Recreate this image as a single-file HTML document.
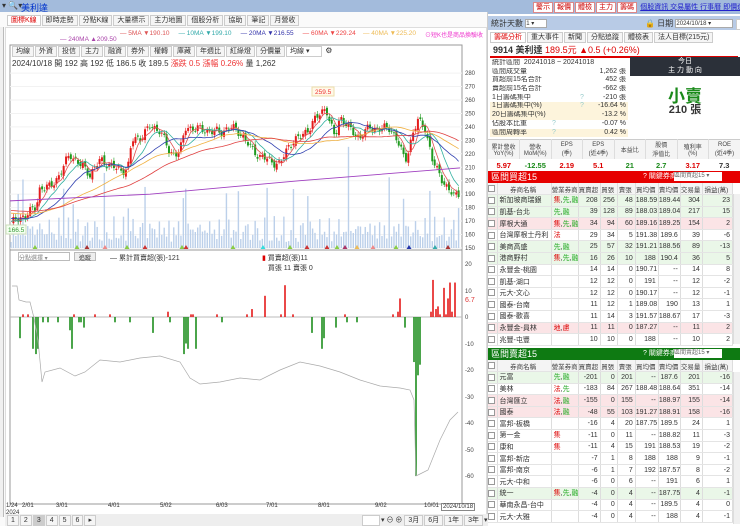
<!DOCTYPE html>
<html><head><meta charset="utf-8">
<style>
*{box-sizing:border-box;margin:0;padding:0}
body{width:740px;height:526px;overflow:hidden;background:#fff;font-family:"Liberation Sans","Noto Sans CJK TC",sans-serif;font-size:8px;color:#333;position:relative}
.abs{position:absolute}
.topbar{left:0;top:0;width:740px;height:12px;background:#a3bbdc}
.tab{display:inline-block;border:1px solid #ccc;background:#f5f5f5;padding:0 3px;height:11px;line-height:10px;font-size:7px;margin-right:1px;color:#333}
.btn{display:inline-block;border:1px solid #d88;background:#fff;color:#c00;font-size:7px;padding:0 2px;height:11px;line-height:10px;margin-right:1px}
table{border-collapse:collapse;table-layout:fixed}
.tb td{height:11.6px;font-size:7px;border-right:1px solid #ddd;border-bottom:1px solid #e4e4e4;text-align:right;padding-right:2px;white-space:nowrap;overflow:hidden}
.tb td.l{text-align:left;padding-left:2px}
.tb td.c{text-align:center}
.tb tr.h td{background:#f4f4f4;text-align:center;color:#444;font-size:6.5px}
.g td{background:#eaf7e8}.p td{background:#fbe4e6}
.tg{color:#d00}.tgg{color:#2a2}
.ck{display:inline-block;width:7px;height:7px;border:1px solid #999;background:#fff;vertical-align:middle}
.sr{position:relative;height:8.7px;line-height:8.7px;font-size:7px;white-space:nowrap;padding-left:2px;overflow:hidden}
.sr b{position:absolute;right:2px;top:0;font-weight:normal}
.sr i{position:absolute;left:90px;top:0;font-style:normal;color:#9cc}
.y{background:#fdf4dc}
</style></head><body>
<div class="abs topbar"></div>
<div class="abs" style="left:2px;top:1px;font-size:8px;color:#333">▾ 🔍▾</div>
<div class="abs" style="left:21px;top:1px;font-size:9px;color:#0033cc">美利達</div>
<div class="abs" style="left:0;top:12px;width:488px;height:514px;background:#fafafa;border-right:1px solid #ccc"></div>
<div class="abs" style="left:0;top:27px;width:4px;height:490px;border-right:1px solid #bbb;background:#f0f0f0"></div>
<div class="abs" style="left:7px;top:15px;white-space:nowrap">
<span class="tab" style="color:#d00;background:#fff">圖標K線</span><span class="tab">即時走勢</span><span class="tab">分點K線</span><span class="tab">大量標示</span><span class="tab">主力地圖</span><span class="tab">個股分析</span><span class="tab">協助</span><span class="tab">筆記</span><span class="tab">月營收</span></div>
<div class="abs" style="left:5px;top:27px;width:482px;height:488px;background:#fff;border:1px solid #ddd"></div>
<div class="abs" style="left:120px;top:30px;font-size:6.5px;white-space:nowrap"><span style="color:#d55">— 5MA ▼190.10</span>&nbsp;&nbsp;&nbsp;&nbsp;&nbsp;<span style="color:#3aa">— 10MA ▼199.10</span>&nbsp;&nbsp;&nbsp;&nbsp;&nbsp;<span style="color:#33a">— 20MA ▼216.55</span>&nbsp;&nbsp;&nbsp;&nbsp;&nbsp;<span style="color:#e44">— 60MA ▼229.24</span>&nbsp;&nbsp;&nbsp;&nbsp;<span style="color:#eb5">— 40MA ▼225.20</span></div>
<div class="abs" style="left:60px;top:36px;font-size:6.5px;color:#a4a">— 240MA ▲209.50</div>
<div class="abs" style="left:425px;top:30px;font-size:6px;color:#e3c">⊙短K也是商品換驗收</div>
<div class="abs" style="left:12px;top:46px;white-space:nowrap"><span class="tab">均線</span><span class="tab">外資</span><span class="tab">投信</span><span class="tab">主力</span><span class="tab">融資</span><span class="tab">券外</span><span class="tab">權轉</span><span class="tab">庫藏</span><span class="tab">年週比</span><span class="tab">紅綠燈</span><span class="tab">分價量</span><span class="tab" style="width:36px;background:#fff">均線 ▾</span> ⚙</div>
<div class="abs" style="left:12px;top:58px;font-size:8px;white-space:nowrap">2024/10/18 開 192 高 192 低 186.5 收 189.5 <span style="color:#e33">漲跌 0.5 漲幅 0.26%</span> 量 1,262</div>
<svg class="abs" style="left:0;top:0" width="488" height="526" id="ch"></svg>
<div class="abs" style="left:18px;top:252px;width:52px;height:9px;border:1px solid #bbb;font-size:6px;color:#888;background:#fff">分點選擇 ▾</div>
<div class="abs" style="left:74px;top:252px;width:22px;height:9px;border:1px solid #bbb;font-size:6px;background:#eee;text-align:center">追蹤</div>
<div class="abs" style="left:110px;top:253px;font-size:7px">— 累計買賣超(張)-121</div>
<div class="abs" style="left:262px;top:253px;font-size:7px"><span style="color:#d00">▮</span> 買賣超(張)11<br>&nbsp;&nbsp;&nbsp;買張 11 賣張 0</div>
<div class="abs" style="left:6px;top:503px;font-size:6px;line-height:7px">1/24<br>2024</div>
<div class="abs" style="left:0;top:503px;width:488px;font-size:6px">
<span class="abs" style="left:22px">2/01</span><span class="abs" style="left:56px">3/01</span><span class="abs" style="left:108px">4/01</span><span class="abs" style="left:160px">5/02</span><span class="abs" style="left:216px">6/03</span><span class="abs" style="left:266px">7/01</span><span class="abs" style="left:318px">8/01</span><span class="abs" style="left:375px">9/02</span><span class="abs" style="left:424px">10/01</span><span class="abs" style="left:441px;border:1px solid #888;padding:0 1px;background:#fff">2024/10/18</span></div>
<div class="abs" style="left:5px;top:514px;width:483px;height:12px;background:#eee"></div>
<div class="abs" style="left:7px;top:515px;font-size:7px;white-space:nowrap"><span class="tab">1</span><span class="tab">2</span><span class="tab" style="background:#ccc">3</span><span class="tab">4</span><span class="tab">5</span><span class="tab">6</span><span class="tab">▸</span></div>
<div class="abs" style="left:362px;top:515px;font-size:7px;white-space:nowrap"><span class="tab" style="width:18px;background:#fff">&nbsp;</span>▾ ⊖ ⊕ <span class="tab">3月</span><span class="tab">6月</span><span class="tab">1年</span><span class="tab">3年</span>▾<span class="tab">邊選</span></div>

<!-- right panel -->
<div class="abs" style="left:488px;top:0;width:252px;height:526px;background:#fff"></div>
<div class="abs" style="left:488px;top:0;width:252px;height:14px;background:#a3bbdc"></div>
<div class="abs" style="left:533px;top:2px;white-space:nowrap"><span class="btn">警示</span><span class="btn">報價</span><span class="btn">體檢</span><span class="btn">主力</span><span class="btn">籌碼</span> <span style="color:#22c;text-decoration:underline;font-size:7px">個股資訊 交易屬性 行事曆 即價選記</span></div>
<div class="abs" style="left:488px;top:16px;width:252px;height:14px;background:#b8cbe6"></div>
<div class="abs" style="left:491px;top:18px;font-size:8px">統計天數 <span style="display:inline-block;width:22px;height:9px;background:#fff;border:1px solid #aaa;font-size:6px;vertical-align:middle">1 ▾</span></div>
<div class="abs" style="left:645px;top:18px;font-size:8px;white-space:nowrap">🔒 日期 <span style="display:inline-block;width:58px;height:9px;background:#fff;border:1px solid #aaa;font-size:6px;vertical-align:middle">2024/10/18 ▾</span> <span class="tab" style="background:#fff">今天</span></div>
<div class="abs" style="left:490px;top:32px;white-space:nowrap"><span class="tab" style="color:#d00;background:#fff">籌碼分析</span><span class="tab">重大事件</span><span class="tab">新聞</span><span class="tab">分點追蹤</span><span class="tab">體檢表</span><span class="tab">法人目標(215元)</span></div>
<div class="abs" style="left:490px;top:44px;width:248px;height:14px;border-bottom:2px solid #d00;font-size:9px;padding-left:3px;line-height:13px"><b>9914 美利達</b> <span style="color:#d00">189.5元 ▲0.5 (+0.26%)</span></div>
<div class="abs" style="left:490px;top:59px;width:138px">
<div class="sr">統計區間 &nbsp;20241018 ~ 20241018</div>
<div class="sr">區間成交量<b>1,262 張</b></div>
<div class="sr">買超前15名合計<b>452 張</b></div>
<div class="sr">賣超前15名合計<b>-662 張</b></div>
<div class="sr">1日籌碼集中<i>?</i><b>-210 張</b></div>
<div class="sr y">1日籌碼集中(%)<i>?</i><b>-16.64 %</b></div>
<div class="sr y">20日籌碼集中(%)<b>-13.2 %</b></div>
<div class="sr">佔股本比重<i style="left:62px">?</i><b>-0.07 %</b></div>
<div class="sr y">區間周轉率<i style="left:62px">?</i><b>0.42 %</b></div>
</div>
<div class="abs" style="left:630px;top:57px;width:110px;height:19px;background:#2b3039;color:#fff;text-align:center;font-size:7px;line-height:9px">今日<br>主 力 動 向</div>
<div class="abs" style="left:630px;top:82px;width:110px;text-align:center;font-size:17px;color:#1a8a1a;font-weight:bold">小賣</div>
<div class="abs" style="left:630px;top:101px;width:110px;text-align:center;font-size:11px;font-weight:bold">210 張</div>
<table class="abs" style="left:488px;top:139px;width:252px;border-top:1px solid #ccc">
<tr style="height:19px;background:#f4f4f4;font-size:6px;text-align:center;color:#444"><td style="border-right:1px solid #ddd">累計營收<br>YoY(%)</td><td style="border-right:1px solid #ddd">營收<br>MoM(%)</td><td style="border-right:1px solid #ddd">EPS<br>(季)</td><td style="border-right:1px solid #ddd">EPS<br>(近4季)</td><td style="border-right:1px solid #ddd">本益比</td><td style="border-right:1px solid #ddd">股價<br>淨值比</td><td style="border-right:1px solid #ddd">殖利率<br>(%)</td><td>ROE<br>(近4季)</td></tr>
<tr style="height:13px;font-size:7.5px;text-align:center;font-weight:bold"><td style="color:#d00">5.97</td><td style="color:#1a8a1a">-12.55</td><td style="color:#d00">2.19</td><td style="color:#d00">5.1</td><td style="color:#1a8a1a">21</td><td style="color:#1a8a1a">2.7</td><td style="color:#d00">3.17</td><td>7.3</td></tr>
</table>
<div class="abs" style="left:488px;top:171px;width:252px;height:12px;background:#e60000;color:#fff;font-size:9px;line-height:12px;padding-left:3px">區間買超15<span style="position:absolute;left:155px;font-size:7px">? 關鍵券商:</span><span style="position:absolute;left:186px;top:1px;width:48px;height:9px;background:#fff;color:#666;font-size:6px;line-height:9px">區間買超15 ▾</span></div>
<div class="abs" style="left:488px;top:348px;width:252px;height:12px;background:#0e7a12;color:#fff;font-size:9px;line-height:12px;padding-left:3px">區間賣超15<span style="position:absolute;left:155px;font-size:7px">? 關鍵券商:</span><span style="position:absolute;left:186px;top:1px;width:48px;height:9px;background:#fff;color:#666;font-size:6px;line-height:9px">區間賣超15 ▾</span></div>
<div class="abs" style="left:733px;top:194px;width:7px;height:150px;background:#f0f0f0;border-left:1px solid #ddd"></div>
<div class="abs" style="left:733px;top:372px;width:7px;height:152px;background:#f0f0f0;border-left:1px solid #ddd"></div>
<div id="t1" class="abs" style="left:488px;top:183px"></div>
<div id="t2" class="abs" style="left:488px;top:360px"></div>

<script>
var W=[9,54,27,22,17,18,23,22,22,30];
function tbl(id,rows){
 var h='<table class="tb" style="width:245px"><colgroup>'+W.map(function(w){return '<col style="width:'+w+'px">'}).join('')+'</colgroup>';
 h+='<tr class="h"><td><span class="ck"></span></td><td>券商名稱</td><td>營業券商</td><td>買賣超</td><td>買張</td><td>賣張</td><td>買均價</td><td>賣均價</td><td>交易量</td><td>損益(萬)</td></tr>';
 rows.forEach(function(r){
  var c=r[0]||'';var tags=(r[2]||'').split(',').map(function(t){return t? '<span class="'+(t=='先'||t=='融'||t=='外'?'tgg':'tg')+'">'+t+'</span>':''}).join(r[2]?',':'');
  h+='<tr class="'+c+'"><td class="c"><span class="ck">'+(r[11]?'✓':'')+'</span></td><td class="l">'+r[1]+'</td><td class="l">'+tags+'</td>';
  for(var i=3;i<10;i++)h+='<td>'+r[i]+'</td>';h+='</tr>';
 });
 document.getElementById(id).innerHTML=h+'</table>';
}
tbl('t1',[
['g','新加坡商瑞銀','集,先,融',208,256,48,'188.59','189.44',304,23],
['g','凱基-台北','先,融',39,128,89,'188.03','189.04',217,15],
['p','摩根大通','集,先,融',34,94,60,'189.16','189.25',154,2],
['','台灣摩根士丹利','法',29,34,5,'191.38','189.6',39,-6],
['g','美商高盛','先,融',25,57,32,'191.21','188.56',89,-13],
['g','港商野村','集,先,融',16,26,10,'188','190.4',36,5],
['','永豐金-桃園','',14,14,0,'190.71','--',14,8],
['','凱基-湖口','',12,12,0,'191','--',12,-2],
['','元大-文心','',12,12,0,'190.17','--',12,-1],
['','國泰-台南','',11,12,1,'189.08','190',13,1],
['','國泰-歡喜','',11,14,3,'191.57','188.67',17,-3],
['p','永豐金-員林','地,慮',11,11,0,'187.27','--',11,2,1],
['','兆豐-屯豐','',10,10,0,'188','--',10,2]]);
tbl('t2',[
['g','元富','先,融',-201,0,201,'--','187.6',201,-16],
['','美林','法,先',-183,84,267,'188.48','188.64',351,-14],
['p','台灣匯立','法,融',-155,0,155,'--','188.97',155,-14],
['p','國泰','法,融',-48,55,103,'191.27','188.91',158,-16],
['','富邦-板橋','',-16,4,20,'187.75','189.5',24,1],
['','第一金','集',-11,0,11,'--','188.82',11,-3],
['','康和','集',-11,4,15,'191','188.53',19,-2],
['','富邦-新店','',-7,1,8,'188','188',9,-1],
['','富邦-南京','',-6,1,7,'192','187.57',8,-2],
['','元大-中和','',-6,0,6,'--','191',6,1],
['g','統一','集,先,融',-4,0,4,'--','187.75',4,-1],
['','華南永昌-台中','',-4,0,4,'--','189.5',4,0],
['','元大-大雅','',-4,0,4,'--','188',4,-1]]);

var s='';
function Y(p){return 100+(260-p)*1.345}
s+='<rect x="10" y="45" width="452" height="459" fill="none" stroke="#999"/>';
s+='<line x1="10" y1="250" x2="462" y2="250" stroke="#999"/>';
for(var p=150;p<=280;p+=10){s+='<text x="465" y="'+(Y(p)+2)+'" font-size="6" fill="#444">'+p+'</text>';s+='<line x1="10" x2="462" y1="'+Y(p)+'" y2="'+Y(p)+'" stroke="#f2f2f2"/>'}
var kp=[[10,168],[20,172],[36,180],[40,195],[50,195],[60,205],[70,220],[80,212],[90,205],[100,215],[110,212],[120,207],[128,210],[132,230],[140,232],[150,240],[160,238],[170,220],[180,222],[186,240],[200,238],[220,236],[230,240],[240,236],[250,225],[260,218],[270,215],[280,212],[290,228],[300,232],[310,240],[320,250],[326,255],[330,242],[335,232],[340,248],[350,238],[360,232],[370,240],[380,238],[390,240],[400,225],[405,215],[412,232],[418,245],[425,240],[432,215],[440,205],[448,192],[455,190],[460,191]];
function interp(x){for(var i=1;i<kp.length;i++)if(x<=kp[i][0]){var a=kp[i-1],b=kp[i];return a[1]+(b[1]-a[1])*(x-a[0])/(b[0]-a[0])}return 191}
var N=188,dx=450/N,cl=[],xs=[];
for(var i=0;i<N;i++){var x=11+i*dx;xs.push(x);cl.push(interp(x)+Math.sin(i*1.7)*2.5+Math.sin(i*0.9)*1.5)}
for(var i=0;i<N;i++){var v=6+Math.abs(Math.sin(i*2.3)*16+Math.sin(i*0.7)*10);if(i%17==5)v+=45;if(i%23==3)v+=30;s+='<rect x="'+(xs[i]-0.7)+'" y="'+(248-v)+'" width="1.4" height="'+v+'" fill="#bcd0ea"/>'}
for(var i=1;i<N;i++){var o=cl[i-1]+Math.sin(i*3.1)*1.5,c=cl[i],up=c>=o,col=up?'#e41b1b':'#1f9a1f';var hi=Math.max(o,c)+1.2+Math.abs(Math.sin(i))*1.5,lo=Math.min(o,c)-1.2-Math.abs(Math.cos(i))*1.5;
s+='<line x1="'+xs[i]+'" x2="'+xs[i]+'" y1="'+Y(hi)+'" y2="'+Y(lo)+'" stroke="'+col+'" stroke-width="0.6"/>';
s+='<rect x="'+(xs[i]-1)+'" y="'+Y(Math.max(o,c))+'" width="2" height="'+Math.max(0.8,Math.abs(o-c)*1.345)+'" fill="'+col+'"/>'}
function ma(n,col,pre){var pts=[];for(var i=0;i<N;i++){var t=0;for(var k=0;k<n;k++){t+=(i-k>=0?cl[i-k]:pre)}pts.push(xs[i].toFixed(1)+','+Y(t/n).toFixed(1))}s+='<polyline fill="none" stroke="'+col+'" stroke-width="0.8" points="'+pts.join(' ')+'"/>'}
ma(5,'#e05050',170);ma(10,'#30b0a0',170);ma(20,'#3040b0',172);ma(40,'#f0b040',176);ma(60,'#e04040',178);
s+='<polyline fill="none" stroke="#a040c0" stroke-width="0.9" points="10,'+Y(185)+' 150,'+Y(190)+' 300,'+Y(200)+' 460,'+Y(209.5)+'"/>';
s+='<rect x="312" y="87" width="22" height="9" fill="#fff8e8" stroke="#eda"/><text x="315" y="94" font-size="6.5" fill="#e33">259.5</text>';
s+='<rect x="6" y="225" width="20" height="9" fill="#f4fff0" stroke="#cdb"/><text x="8" y="232" font-size="6.5" fill="#393">166.5</text>';
[[35,'#8c4'],[77,'#8c4'],[87,'#a33'],[105,'#e88'],[127,'#8c4'],[145,'#c33'],[182,'#8c4'],[186,'#c33'],[233,'#8c4'],[263,'#3dd'],[290,'#8c4'],[307,'#c33'],[327,'#c33'],[337,'#8c4'],[345,'#a36'],[357,'#eb5'],[373,'#e88'],[396,'#8c4'],[409,'#23a'],[435,'#3aa'],[448,'#a33']].forEach(function(t){s+='<polygon points="'+(t[0]-2.5)+',249 '+(t[0]+2.5)+',249 '+t[0]+',245" fill="'+t[1]+'"/>'});
function L(v){return 317-v*2.65}
[[20,264],[10,291],[0,317],[-10,344],[-20,370],[-30,397],[-40,423],[-50,450],[-60,476]].forEach(function(a){s+='<text x="465" y="'+(a[1]+2)+'" font-size="6" fill="#444">'+a[0]+'</text>'});
s+='<text x="465" y="302" font-size="7" fill="#d33">6.7</text>';
s+='<line x1="10" x2="462" y1="317" y2="317" stroke="#bbb"/>';
var lb=[[20,-8],[23,1],[28,1],[33,-12],[36,-14],[38,-12],[43,-2],[48,-2],[58,-2],[70,-5],[72,-12],[74,1],[79,-2],[81,-2],[84,-4],[95,1],[110,1],[115,-2],[130,-2],[153,-6],[168,2],[170,-2],[184,-14],[186,-10],[188,-12],[191,1],[193,1],[196,-12],[217,1],[222,-2],[247,1],[252,3],[265,8],[281,1],[285,12],[293,1],[312,-6],[322,-12],[324,-8],[336,-4],[345,1],[347,-2],[357,-2],[393,1],[398,2],[400,7],[405,-4],[414,-17],[416,-60],[418,-22],[420,-18],[431,2],[433,14],[436,3],[438,4],[440,1],[444,11],[446,1],[448,7],[450,13],[452,2],[455,13]];
lb.forEach(function(b){var v=b[1];s+='<rect x="'+(b[0]-0.8)+'" y="'+(v>0?L(v):317)+'" width="1.6" height="'+Math.abs(v*2.65)+'" fill="'+(v>0?'#e41b1b':'#1f8f1f')+'"/>'});
s+='<polyline fill="none" stroke="#aaa" stroke-width="0.7" points="12,286 17,286 19,300 26,302 30,302 34,318 38,340 42,382 45,372 60,368 75,376 85,372 100,360 120,362 140,358 160,356 180,362 190,378 200,384 220,382 240,378 260,380 280,370 300,362 320,366 340,372 360,380 380,386 400,388 410,390 414,400 416,476 420,474 428,470 440,440 450,420 458,412"/>';
document.getElementById('ch').innerHTML=s;
</script>
</body></html>
